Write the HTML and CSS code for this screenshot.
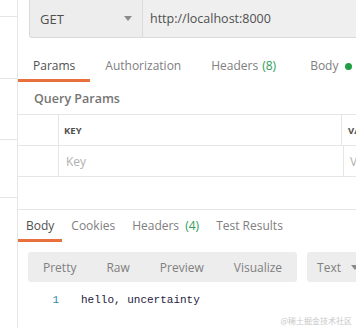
FILE: index.html
```html
<!DOCTYPE html>
<html>
<head>
<meta charset="utf-8">
<link rel="stylesheet" href="styles.css">
</head>
<body>
<div class="sidebar">
  <div class="sitem s1"></div>
  <div class="sitem s2"></div>
  <div class="sitem s3"></div>
  <div class="sitem s4"></div>
</div>
<div class="main">
  <div class="urlbar">
    <div class="method"><span>GET</span><span class="caret"></span></div>
    <div class="url">http://localhost:8000</div>
  </div>
  <div class="reqtabs">
    <div class="tab active">Params</div>
    <div class="tab">Authorization</div>
    <div class="tab">Headers <span class="green">(8)</span></div>
    <div class="tab last">Body <span class="dot"></span></div>
  </div>
  <div class="qp">Query Params</div>
  <div class="table">
    <div class="row head">
      <div class="c0"></div>
      <div class="c1">KEY</div>
      <div class="c2">VALUE</div>
    </div>
    <div class="row">
      <div class="c0"></div>
      <div class="c1 ph">Key</div>
      <div class="c2 ph">Value</div>
    </div>
  </div>
  <div class="response">
    <div class="restabs">
      <div class="rtab active">Body</div>
      <div class="rtab">Cookies</div>
      <div class="rtab">Headers <span class="green">(4)</span></div>
      <div class="rtab">Test Results</div>
    </div>
    <div class="toolbar">
      <div class="modes">
        <div class="mode">Pretty</div>
        <div class="mode">Raw</div>
        <div class="mode">Preview</div>
        <div class="mode">Visualize</div>
      </div>
      <div class="fmt"><span>Text</span><span class="caret"></span></div>
    </div>
    <div class="code">
      <span class="ln">1</span><span class="txt">hello, uncertainty</span>
    </div>
  </div>
</div>
<div class="watermark">@稀土掘金技术社区</div>
</body>
</html>
```

FILE: styles.css
```css
html, body {
  margin: 0;
  padding: 0;
}
body {
  width: 356px;
  height: 328px;
  overflow: hidden;
  display: flex;
  background: #fff;
  font-family: "Open Sans", "Noto Sans", sans-serif;
  font-size: 12px;
  color: #808080;
  position: relative;
}
.sidebar {
  width: 17px;
  flex: none;
  border-right: 1px solid #e6e6e6;
}
.sitem {
  border-bottom: 1px solid #e6e6e6;
}
.s1 { height: 16px; }
.s2 { height: 61px; }
.s3 { height: 60px; }
.s4 { height: 57px; }
.main {
  flex: 1;
  min-width: 0;
  display: flex;
  flex-direction: column;
}
.urlbar {
  display: flex;
  height: 38px;
  padding-left: 11px;
  white-space: nowrap;
}
.method {
  width: 92px;
  flex: none;
  box-sizing: content-box;
  background: #ededed;
  border: 1px solid #dadada;
  border-top: none;
  border-radius: 0 0 0 3px;
  display: flex;
  align-items: center;
  justify-content: space-between;
  padding: 0 10px 0 10px;
  color: #505050;
  font-size: 13px;
  height: 37px;
}
.caret {
  width: 0;
  height: 0;
  border-left: 4px solid transparent;
  border-right: 4px solid transparent;
  border-top: 5px solid #8a8a8a;
}
.url {
  flex: 1;
  background: #efefef;
  border-bottom: 1px solid #dadada;
  height: 37px;
  line-height: 37px;
  padding-left: 7px;
  color: #505050;
  font-size: 12.5px;
  overflow: hidden;
}
.reqtabs {
  display: flex;
  margin-top: 10px;
  white-space: nowrap;
}
.tab {
  padding: 8px 15px 3px;
  line-height: 20px;
  border-bottom: 3px solid transparent;
  display: flex;
  align-items: center;
}
.tab.last {
  margin-left: 4px;
}
.tab.active {
  border-bottom-color: #e8703c;
  color: #505050;
}
.green {
  color: #2f9e58;
  margin-left: 4px;
}
.dot {
  display: inline-block;
  width: 7px;
  height: 7px;
  border-radius: 50%;
  background: #1f9e45;
  margin-left: 7px;
}
.qp {
  padding: 7px 16px 5px;
  line-height: 20px;
  font-size: 12.5px;
  font-weight: 600;
  color: #757575;
}
.table {
  border-top: 1px solid #e6e6e6;
}
.row {
  display: flex;
  height: 30px;
  border-bottom: 1px solid #e6e6e6;
  white-space: nowrap;
  overflow: hidden;
}
.c0 {
  width: 40px;
  flex: none;
  border-right: 1px solid #e6e6e6;
}
.c1 {
  width: 277px;
  flex: none;
  padding-left: 5px;
  border-right: 1px solid #e6e6e6;
  display: flex;
  align-items: center;
}
.c2 {
  padding-left: 6px;
  display: flex;
  align-items: center;
}
.head .c1, .head .c2 {
  font-size: 9.5px;
  font-weight: 700;
  color: #505050;
}
.row .ph {
  color: #b0b0b0;
}
.row .c1.ph {
  padding-left: 7px;
}
.response {
  margin-top: 32px;
  border-top: 1px solid #e6e6e6;
}
.restabs {
  display: flex;
  white-space: nowrap;
}
.rtab {
  padding: 6px 8px 3px;
  line-height: 20px;
  border-bottom: 3px solid transparent;
  margin-right: 1px;
}
.rtab.active {
  border-bottom-color: #e8703c;
  color: #505050;
}
.restabs .green {
  margin-left: 3px;
}
.toolbar {
  display: flex;
  margin: 10px 0 0 10px;
  gap: 10px;
  white-space: nowrap;
}
.modes {
  display: flex;
  background: #ededed;
  border-radius: 3px;
  height: 30px;
  align-items: center;
  flex: none;
}
.mode {
  padding: 0 15px;
}
.fmt {
  flex: 1;
  background: #ededed;
  border-radius: 3px;
  height: 30px;
  display: flex;
  align-items: center;
  gap: 10px;
  padding-left: 10px;
}
.code {
  display: flex;
  margin-top: 11px;
  line-height: 14px;
  font-family: "Liberation Mono", "DejaVu Sans Mono", monospace;
  font-size: 11px;
}
.ln {
  color: #2b8ba3;
  width: 41px;
  text-align: right;
  flex: none;
}
.txt {
  color: #262140;
  margin-left: 22px;
}
.watermark {
  position: absolute;
  right: 4px;
  bottom: 2px;
  font-size: 8px;
  color: #c8c8c8;
  font-family: "Noto Sans CJK SC", sans-serif;
}
```
